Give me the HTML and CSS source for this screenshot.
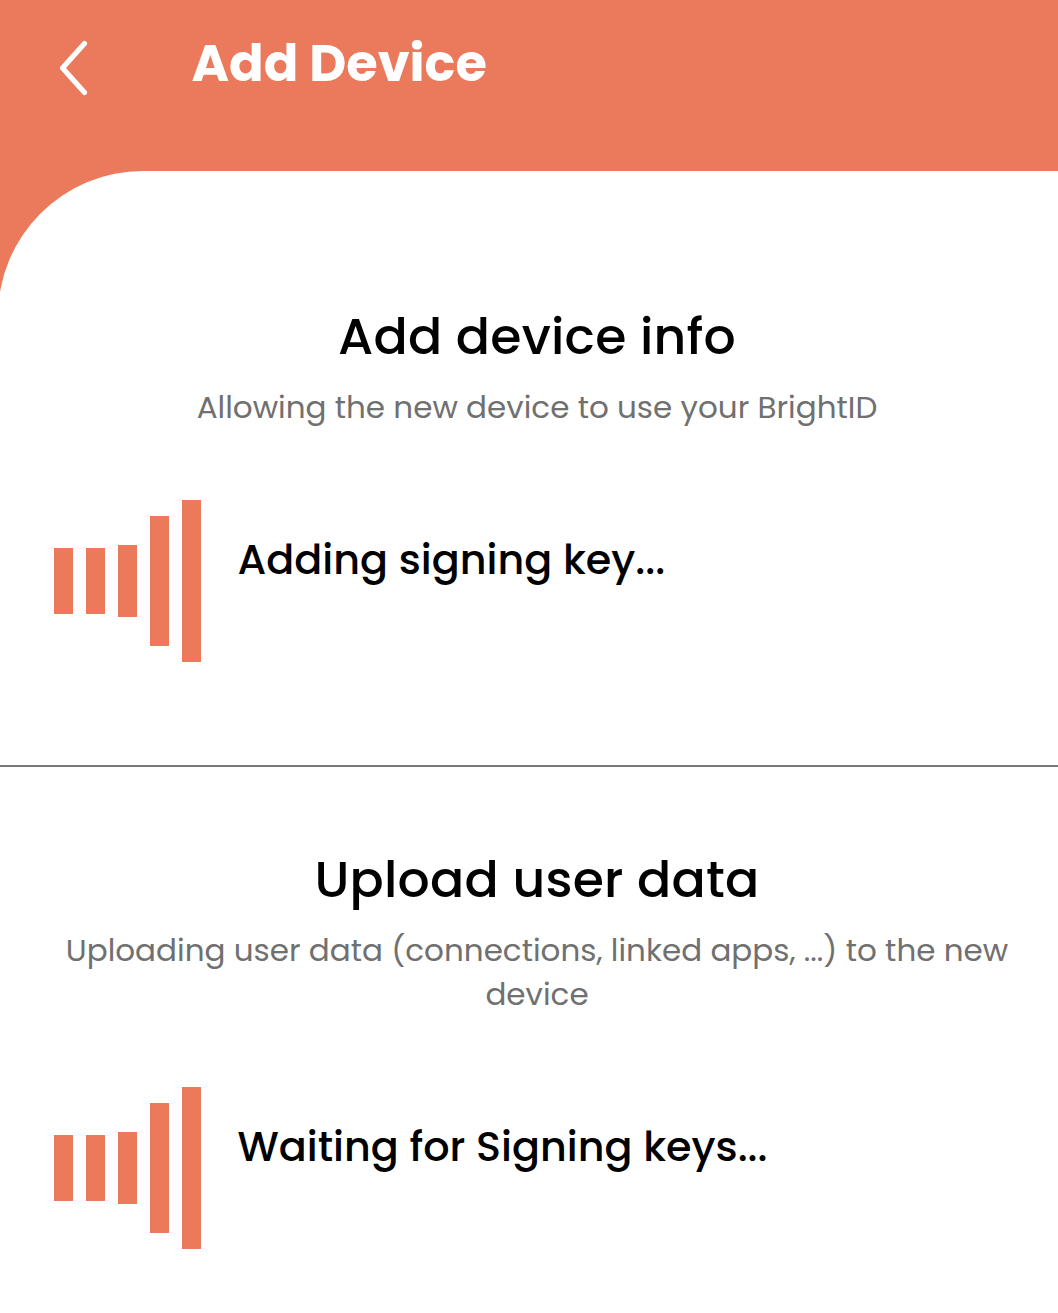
FILE: index.html
```html
<!DOCTYPE html>
<html lang="en">
<head>
<meta charset="utf-8">
<title>Add Device</title>
<link rel="stylesheet" href="styles.css">
</head>
<body>
<header class="header">
  <svg class="back" width="34" height="60" viewBox="0 0 34 60" fill="none" stroke="#fff" stroke-width="5.2" stroke-linecap="round" stroke-linejoin="round" role="img" aria-label="Back"><path d="M27.5 5.5 5.5 30 27.5 54.5"/></svg>
  <h1 class="title">Add Device</h1>
</header>
<main class="sheet">
  <section class="step step-info">
    <h2 class="heading">Add device info</h2>
    <p class="description">Allowing the new device to use your BrightID</p>
    <div class="progress">
      <div class="bars"><i class="bar short"></i><i class="bar short"></i><i class="bar mid"></i><i class="bar tall"></i><i class="bar full"></i></div>
      <p class="status">Adding signing key...</p>
    </div>
  </section>
  <section class="step step-upload">
    <h2 class="heading">Upload user data</h2>
    <p class="description">Uploading user data (connections, linked apps, ...) to the new<br>device</p>
    <div class="progress">
      <div class="bars"><i class="bar short"></i><i class="bar short"></i><i class="bar mid"></i><i class="bar tall"></i><i class="bar full"></i></div>
      <p class="status">Waiting for Signing keys...</p>
    </div>
  </section>
</main>
</body>
</html>
```
FILE: styles.css
```css
* { box-sizing: border-box; }
body {
  margin: 0;
  height: 1313px;
  overflow: hidden;
  background: #eb795b;
  color: #000;
  font-family: Poppins, Inter, sans-serif;
  font-feature-settings: "cv11";
}
h1, h2, p { margin: 0; }
.header { display: flex; height: 171px; padding: 38px 0 0 57px; }
.back { flex: none; }
.title {
  margin: -10px 0 0 100.5px;
  color: #fff;
  font-size: 51px;
  font-weight: 700;
  line-height: 70px;
  white-space: nowrap;
}
.sheet {
  height: 1142px;
  margin-left: -2px;
  background: #fff;
  border-top-left-radius: 145px;
}
.step { padding-left: 18px; }
.step-info { height: 596px; padding-top: 131px; border-bottom: 2px solid #777; }
.step-upload { padding-top: 78px; }
.heading {
  font-size: 50.5px;
  font-weight: 500;
  line-height: 69px;
  margin-bottom: 1px;
  letter-spacing: 0.25px;
  text-align: center;
  white-space: nowrap;
}
.description {
  padding-top: 13px;
  color: #707070;
  font-size: 31px;
  font-weight: 400;
  line-height: 44px;
  text-align: center;
  white-space: nowrap;
}
.progress { display: flex; margin-top: 71px; padding-left: 38px; }
.bars { display: flex; align-items: center; gap: 13px; height: 162px; }
.bar { width: 19px; background: #eb795b; }
.short { height: 65.1px; }
.mid { height: 71.1px; }
.tall { height: 129.1px; }
.full { height: 162px; }
.status {
  margin: 30px 0 0 36.5px;
  font-size: 41.3px;
  font-weight: 500;
  line-height: 60px;
  white-space: nowrap;
}
```
